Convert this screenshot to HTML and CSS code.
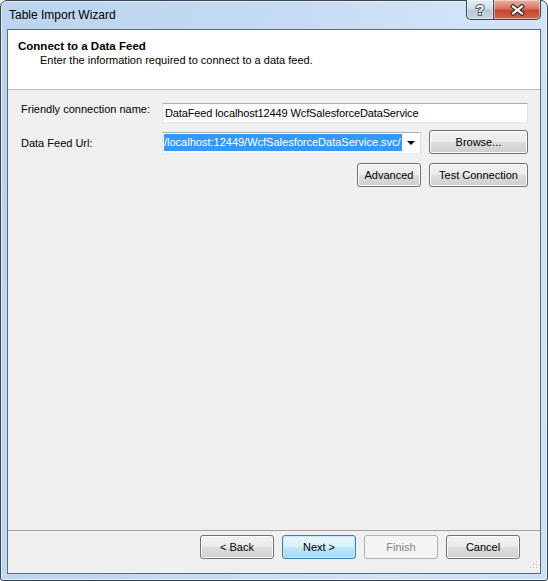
FILE: index.html
```html
<!DOCTYPE html>
<html>
<head>
<meta charset="utf-8">
<title>Table Import Wizard</title>
<link rel="stylesheet" href="styles.css">
</head>
<body>
<div class="window">
  <div class="titlebar">
    <span class="title">Table Import Wizard</span>
    <div class="caption">
      <div class="cb help">
        <svg width="12" height="16" viewBox="0 0 12 16"><text x="6" y="13" text-anchor="middle" class="qmark">?</text></svg>
      </div>
      <div class="cb close">
        <svg width="15" height="12" viewBox="0 0 15 12">
          <path d="M3 2.5 L12 9.5 M12 2.5 L3 9.5" stroke="#3b2e2e" stroke-width="4.4" stroke-linecap="square" fill="none"/>
          <path d="M3 2.5 L12 9.5 M12 2.5 L3 9.5" stroke="#ffffff" stroke-width="2.2" stroke-linecap="square" fill="none"/>
        </svg>
      </div>
    </div>
  </div>
  <div class="client">
    <div class="header">
      <div class="h-title">Connect to a Data Feed</div>
      <div class="h-sub">Enter the information required to connect to a data feed.</div>
    </div>
    <div class="content">
      <div class="row row1">
        <div class="label">Friendly connection name:</div>
        <div class="textbox">DataFeed localhost12449 WcfSalesforceDataService</div>
      </div>
      <div class="row row2">
        <div class="label">Data Feed Url:</div>
        <div class="combo">
          <div class="combo-text"><span class="sel">/localhost:12449/WcfSalesforceDataService.svc/</span></div>
          <div class="combo-arrow"><span class="tri"></span></div>
        </div>
        <button class="btn browse">Browse...</button>
      </div>
      <div class="row row3">
        <button class="btn advanced">Advanced</button>
        <button class="btn test">Test Connection</button>
      </div>
    </div>
    <div class="footer">
      <button class="btn fbtn">&lt; Back</button>
      <button class="btn fbtn default">Next &gt;</button>
      <button class="btn fbtn disabled">Finish</button>
      <button class="btn fbtn">Cancel</button>
    </div>
    <svg class="grip" width="12" height="12" viewBox="0 0 12 12">
      <g fill="#ffffff">
        <rect x="10" y="2" width="1" height="1"/>
        <rect x="7" y="5" width="1" height="1"/><rect x="10" y="5" width="1" height="1"/>
        <rect x="4" y="8" width="1" height="1"/><rect x="7" y="8" width="1" height="1"/><rect x="10" y="8" width="1" height="1"/>
      </g>
      <g fill="#b8b8b8">
        <rect x="9" y="1" width="1" height="1"/>
        <rect x="6" y="4" width="1" height="1"/><rect x="9" y="4" width="1" height="1"/>
        <rect x="3" y="7" width="1" height="1"/><rect x="6" y="7" width="1" height="1"/><rect x="9" y="7" width="1" height="1"/>
      </g>
    </svg>
  </div>
</div>
</body>
</html>
```

FILE: styles.css
```css
* { box-sizing: border-box; }

html, body {
  margin: 0;
  padding: 0;
  background: #ffffff;
}

body {
  width: 548px;
  height: 581px;
  overflow: hidden;
  font-family: "Liberation Sans", Arial, sans-serif;
  font-size: 11px;
  color: #000000;
}

.window {
  width: 548px;
  height: 581px;
  border: 1px solid #3a4654;
  border-radius: 7px 7px 3px 3px;
  background: linear-gradient(100deg, #bcd4ee 0%, #c4daf2 40%, #d2e4f8 75%, #cde1f6 100%);
  box-shadow: inset 0 0 0 1px rgba(255, 255, 255, 0.55);
  display: flex;
  flex-direction: column;
}

.titlebar {
  height: 28px;
  flex: none;
  display: flex;
  align-items: flex-start;
  padding-left: 8px;
}

.title {
  font-size: 12px;
  line-height: 14px;
  padding-top: 7px;
}

.caption {
  margin-left: auto;
  margin-right: 6px;
  margin-top: -1px;
  display: flex;
  height: 20px;
}

.cb {
  height: 20px;
  border: 1px solid #3b4857;
  border-top: none;
  display: flex;
  align-items: center;
  justify-content: center;
  box-shadow: inset 0 0 0 1px rgba(255, 255, 255, 0.45);
}

.cb.help {
  width: 27px;
  border-right: none;
  border-radius: 0 0 0 5px;
  background: linear-gradient(#e6edf5 0%, #d0dbe8 48%, #b8c7d8 52%, #c6d4e3 100%);
}

.cb.close {
  width: 48px;
  border-radius: 0 0 5px 0;
  background: linear-gradient(#eab0a3 0%, #d9735f 46%, #c6452f 54%, #d5624a 100%);
}

.qmark {
  font-family: "Liberation Sans", Arial, sans-serif;
  font-weight: bold;
  font-size: 14px;
  fill: #ffffff;
  stroke: #4a5868;
  stroke-width: 2px;
  paint-order: stroke;
}

.client {
  flex: 1;
  margin: 0 6px 6px;
  border: 1px solid #5b6b7b;
  background: #f0f0f0;
  display: flex;
  flex-direction: column;
  position: relative;
}

.header {
  height: 60px;
  flex: none;
  background: #ffffff;
  border-bottom: 1px solid #b9b9b9;
  padding: 9px 0 0 10px;
}

.h-title {
  font-weight: bold;
  font-size: 11.5px;
  line-height: 14px;
}

.h-sub {
  line-height: 14px;
  padding-left: 22px;
}

.content {
  flex: 1;
  padding: 13px 0 0 13px;
  display: flex;
  flex-direction: column;
}

.row {
  display: flex;
  align-items: flex-start;
  width: 507px;
}

.label {
  width: 141px;
  flex: none;
  line-height: 14px;
}

.row1 .label { margin-top: -1px; }

.textbox {
  width: 366px;
  height: 20px;
  background: #ffffff;
  border: 1px solid;
  border-color: #abadb3 #dbdfe6 #e3e9ef #e2e3ea;
  padding-left: 2px;
  line-height: 18px;
  letter-spacing: -0.12px;
  white-space: nowrap;
  overflow: hidden;
}

.row2 { margin-top: 7px; }
.row2 .label { padding-top: 6px; }

.combo {
  width: 259px;
  height: 22px;
  margin-top: 2px;
  background: #ffffff;
  border: 1px solid;
  border-color: #abadb3 #dbdfe6 #e3e9ef #e2e3ea;
  display: flex;
  padding: 1px 0 0 1px;
}

.combo-text {
  flex: 1;
  overflow: hidden;
  white-space: nowrap;
}

.sel {
  display: block;
  background: #3399ff;
  color: #ffffff;
  line-height: 17px;
  height: 17px;
  overflow: hidden;
}

.combo-arrow {
  width: 18px;
  flex: none;
  display: flex;
  align-items: center;
  justify-content: center;
  padding-bottom: 1px;
}

.tri {
  width: 0;
  height: 0;
  border-left: 4px solid transparent;
  border-right: 4px solid transparent;
  border-top: 4px solid #000000;
}

.btn {
  font-family: "Liberation Sans", Arial, sans-serif;
  font-size: 11px;
  color: #000000;
  height: 24px;
  padding: 0;
  border: 1px solid #707070;
  border-radius: 3px;
  background: linear-gradient(#f2f2f2 0%, #ebebeb 50%, #dddddd 50%, #cfcfcf 100%);
  box-shadow: inset 0 0 0 1px #fbfbfb;
  display: flex;
  align-items: center;
  justify-content: center;
  line-height: 14px;
}

.browse {
  width: 99px;
  margin-left: 8px;
}

.row3 {
  margin-top: 9px;
  justify-content: flex-end;
  gap: 8px;
}

.advanced { width: 64px; }
.test { width: 99px; }

.footer {
  height: 43px;
  flex: none;
  border-top: 1px solid #a0a0a0;
  padding: 4px 20px 0 0;
  display: flex;
  justify-content: flex-end;
  align-items: flex-start;
  gap: 8px;
}

.fbtn { width: 74px; }

.btn.default {
  border-color: #3c7fb1;
  background: linear-gradient(#eaf6fd 0%, #d9f0fc 50%, #bee6fd 50%, #a7d9f5 100%);
  box-shadow: inset 0 0 0 1px #c8e8fa;
}

.btn.disabled {
  border-color: #adb2b5;
  background: #f4f4f4;
  box-shadow: none;
  color: #838383;
}

.grip {
  position: absolute;
  right: 1px;
  bottom: 1px;
}
```
